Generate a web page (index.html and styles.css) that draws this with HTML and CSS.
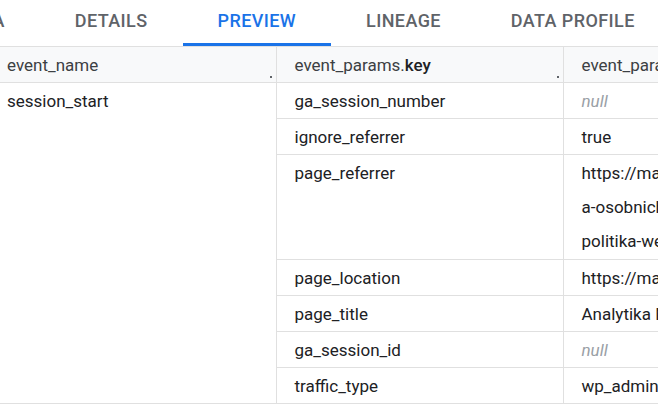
FILE: index.html
```html
<!DOCTYPE html>
<html>
<head>
<meta charset="utf-8">
<link rel="stylesheet" href="styles.css">
</head>
<body>
<div class="page">
  <nav class="tabs">
    <div class="tab">SCHEMA</div>
    <div class="tab">DETAILS</div>
    <div class="tab active">PREVIEW</div>
    <div class="tab">LINEAGE</div>
    <div class="tab">DATA PROFILE</div>
  </nav>
  <table class="grid">
    <thead>
      <tr>
        <th><span class="hdr">event_name</span><span class="handle"></span></th>
        <th><span class="hdr">event_params.<b>key</b></span><span class="handle"></span></th>
        <th><span class="hdr">event_params.value.string_value</span></th>
      </tr>
    </thead>
    <tbody>
      <tr>
        <td class="first" rowspan="7">session_start</td>
        <td>ga_session_number</td>
        <td class="null">null</td>
      </tr>
      <tr><td>ignore_referrer</td><td>true</td></tr>
      <tr class="tall"><td>page_referrer</td><td><div>https://marketing-analytika.cz/ochrana-</div><div>a-osobnich-udaju</div><div>politika-webu/</div></td></tr>
      <tr><td>page_location</td><td>https://marketing-analytika.cz/</td></tr>
      <tr><td>page_title</td><td>Analytika Marketing</td></tr>
      <tr><td>ga_session_id</td><td class="null">null</td></tr>
      <tr><td>traffic_type</td><td>wp_admin</td></tr>
    </tbody>
  </table>
</div>
</body>
</html>
```
FILE: styles.css
```css
html, body {
  margin: 0;
  padding: 0;
  background: #ffffff;
  overflow: hidden;
}
body {
  width: 658px;
  height: 406px;
  font-family: Roboto, "Liberation Sans", sans-serif;
}
.page {
  width: 1000px;
}
.tabs {
  display: flex;
  height: 46px;
  margin-left: -106px;
}
.tab {
  box-sizing: border-box;
  height: 46px;
  padding: 0 35px 2px;
  display: flex;
  align-items: center;
  font-size: 18px;
  font-weight: 500;
  color: #5f6368;
  letter-spacing: 0.4px;
  border-bottom: 3px solid transparent;
}
.tab.active {
  color: #1a73e8;
  border-bottom-color: #1a73e8;
}
.grid {
  border-collapse: collapse;
  margin-left: -11px;
  table-layout: fixed;
  width: 861px;
  font-size: 17px;
  color: #202124;
}
.grid th {
  position: relative;
  background: #f8f9fa;
  height: 36px;
  box-sizing: border-box;
  padding: 0 18px;
  text-align: left;
  font-weight: 400;
  color: #3c4043;
  border-top: 1px solid #e0e0e0;
  border-bottom: 1px solid #e0e0e0;
  border-right: 1px solid #e0e0e0;
  white-space: nowrap;
  overflow: hidden;
  width: 287px;
}
.grid th b {
  font-weight: 500;
  color: #202124;
}
.handle {
  position: absolute;
  right: 4px;
  bottom: 4px;
  width: 2px;
  height: 2px;
  background: #5f6368;
}
.grid td {
  height: 36px;
  box-sizing: border-box;
  padding: 0 18px;
  border-right: 1px solid #e0e0e0;
  border-bottom: 1px solid #e0e0e0;
  white-space: nowrap;
  overflow: hidden;
  vertical-align: middle;
}
.grid td.first {
  vertical-align: top;
  padding-top: 8px;
}
.grid td.null {
  font-style: italic;
  color: #9aa0a6;
}
.grid tr.tall td {
  vertical-align: top;
  padding-top: 1px;
  padding-bottom: 1px;
  line-height: 34px;
}
```
